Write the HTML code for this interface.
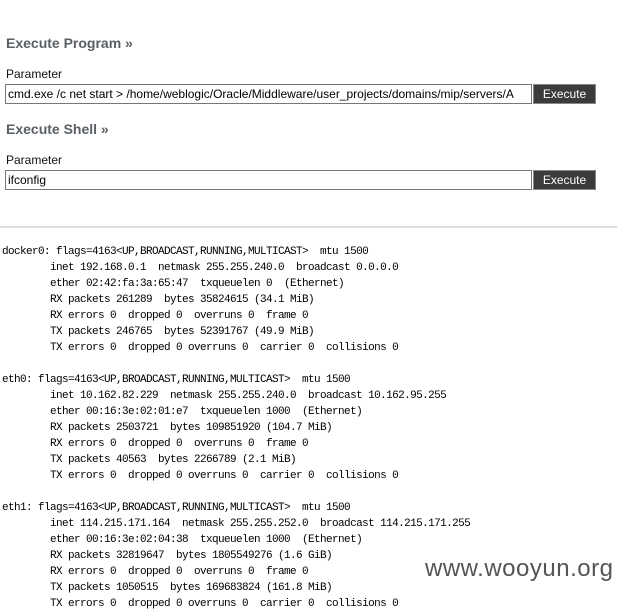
<!DOCTYPE html>
<html><head><meta charset="utf-8"><style>
body{margin:0;background:#fff;width:631px;height:599px;overflow:hidden;position:relative;font-family:"Liberation Sans",Arial,sans-serif;}
.h{position:absolute;left:6px;font-weight:bold;font-size:14px;color:#5a5f66;}
.l{position:absolute;left:6px;font-size:12px;color:#111;}
.in{position:absolute;left:5px;height:18px;border:1px solid #777;box-sizing:content-box;font-size:12px;line-height:18px;padding-left:2px;color:#000;white-space:nowrap;overflow:hidden;width:523px;}
.b{position:absolute;left:533px;width:63px;height:20px;background:#3b3b3b;border:1px solid #888;box-sizing:border-box;color:#fff;font-size:12px;text-align:center;line-height:18px;}
hr{position:absolute;left:0;top:226px;width:617px;margin:0;border:0;border-top:2px solid #ddd;}
pre{position:absolute;left:2px;top:244px;margin:0;font-family:"Liberation Mono",monospace;font-size:11px;letter-spacing:-0.6px;line-height:16px;color:#000;}
.w{position:absolute;left:425px;top:555px;font-size:24px;color:#555;letter-spacing:0.5px;background:rgba(255,255,255,0.6);}
</style></head><body>
<div class="h" style="top:35px">Execute Program »</div>
<div class="l" style="top:67px">Parameter</div>
<div class="in" style="top:84px">cmd.exe /c net start &gt; /home/weblogic/Oracle/Middleware/user_projects/domains/mip/servers/A</div>
<div class="b" style="top:84px">Execute</div>
<div class="h" style="top:121px">Execute Shell »</div>
<div class="l" style="top:153px">Parameter</div>
<div class="in" style="top:170px">ifconfig</div>
<div class="b" style="top:170px">Execute</div>
<hr>
<pre>docker0: flags=4163&lt;UP,BROADCAST,RUNNING,MULTICAST&gt;  mtu 1500
        inet 192.168.0.1  netmask 255.255.240.0  broadcast 0.0.0.0
        ether 02:42:fa:3a:65:47  txqueuelen 0  (Ethernet)
        RX packets 261289  bytes 35824615 (34.1 MiB)
        RX errors 0  dropped 0  overruns 0  frame 0
        TX packets 246765  bytes 52391767 (49.9 MiB)
        TX errors 0  dropped 0 overruns 0  carrier 0  collisions 0

eth0: flags=4163&lt;UP,BROADCAST,RUNNING,MULTICAST&gt;  mtu 1500
        inet 10.162.82.229  netmask 255.255.240.0  broadcast 10.162.95.255
        ether 00:16:3e:02:01:e7  txqueuelen 1000  (Ethernet)
        RX packets 2503721  bytes 109851920 (104.7 MiB)
        RX errors 0  dropped 0  overruns 0  frame 0
        TX packets 40563  bytes 2266789 (2.1 MiB)
        TX errors 0  dropped 0 overruns 0  carrier 0  collisions 0

eth1: flags=4163&lt;UP,BROADCAST,RUNNING,MULTICAST&gt;  mtu 1500
        inet 114.215.171.164  netmask 255.255.252.0  broadcast 114.215.171.255
        ether 00:16:3e:02:04:38  txqueuelen 1000  (Ethernet)
        RX packets 32819647  bytes 1805549276 (1.6 GiB)
        RX errors 0  dropped 0  overruns 0  frame 0
        TX packets 1050515  bytes 169683824 (161.8 MiB)
        TX errors 0  dropped 0 overruns 0  carrier 0  collisions 0</pre>
<div class="w">www.wooyun.org</div>
</body></html>
